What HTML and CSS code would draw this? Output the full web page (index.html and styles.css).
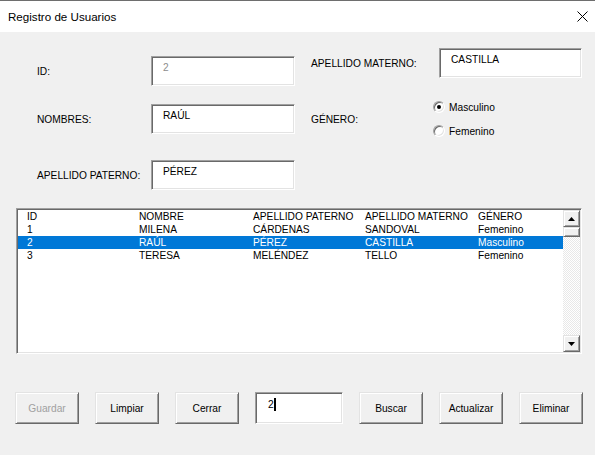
FILE: index.html
```html
<!DOCTYPE html>
<html lang="es">
<head>
<meta charset="utf-8">
<title>Registro de Usuarios</title>
<link rel="stylesheet" href="styles.css">
</head>
<body>
<div class="window">
  <div class="titlebar">
    <span class="title">Registro de Usuarios</span>
    <svg class="close" width="11" height="11" viewBox="0 0 11 11"><path d="M0.5 0.5 L10.5 10.5 M10.5 0.5 L0.5 10.5" stroke="#000" stroke-width="1" fill="none"/></svg>
  </div>
  <div class="content">
    <div class="form">
      <div class="col-left">
        <div class="field"><span class="label">ID:</span><div class="textbox disabled">2</div></div>
        <div class="field f-nom"><span class="label">NOMBRES:</span><div class="textbox">RAÚL</div></div>
        <div class="field f-pat"><span class="label">APELLIDO PATERNO:</span><div class="textbox">PÉREZ</div></div>
      </div>
      <div class="col-right">
        <div class="field-r"><span class="label">APELLIDO MATERNO:</span><div class="textbox">CASTILLA</div></div>
        <div class="gender">
          <span class="label">GÉNERO:</span>
          <div class="radios">
            <div class="radio-row"><span class="radio"><span class="dot"></span></span><span>Masculino</span></div>
            <div class="radio-row"><span class="radio"></span><span>Femenino</span></div>
          </div>
        </div>
      </div>
    </div>
    <div class="listbox">
      <div class="rows">
        <div class="row"><span>ID</span><span>NOMBRE</span><span>APELLIDO PATERNO</span><span>APELLIDO MATERNO</span><span>GÉNERO</span></div>
        <div class="row"><span>1</span><span>MILENA</span><span>CÁRDENAS</span><span>SANDOVAL</span><span>Femenino</span></div>
        <div class="row selected"><span>2</span><span>RAÚL</span><span>PÉREZ</span><span>CASTILLA</span><span>Masculino</span></div>
        <div class="row"><span>3</span><span>TERESA</span><span>MELÉNDEZ</span><span>TELLO</span><span>Femenino</span></div>
      </div>
      <div class="scrollbar">
        <div class="sb-btn"><svg width="7" height="4" viewBox="0 0 7 4"><path d="M3.5 0 L7 4 L0 4 Z" fill="#000"/></svg></div>
        <div class="sb-thumb"></div>
        <div class="sb-track"></div>
        <div class="sb-btn"><svg width="7" height="4" viewBox="0 0 7 4"><path d="M0 0 L7 0 L3.5 4 Z" fill="#000"/></svg></div>
      </div>
    </div>
    <div class="buttons">
      <div class="btn disabled">Guardar</div>
      <div class="btn">Limpiar</div>
      <div class="btn">Cerrar</div>
      <div class="textbox search">2<span class="caret"></span></div>
      <div class="btn">Buscar</div>
      <div class="btn">Actualizar</div>
      <div class="btn">Eliminar</div>
    </div>
  </div>
</div>
</body>
</html>
```

FILE: styles.css
```css
* { box-sizing: border-box; }
html, body { margin: 0; padding: 0; }
body {
  width: 595px;
  height: 455px;
  overflow: hidden;
  background: #f0f0f0;
  font-family: "Liberation Sans", Arial, sans-serif;
  font-size: 10.2px;
  color: #000;
}
.window { display: flex; flex-direction: column; height: 455px; }
.titlebar {
  height: 32px;
  background: #fff;
  border-top: 1px solid #6e6e6e;
  display: flex;
  align-items: center;
  justify-content: space-between;
  padding: 0 7px 0 8px;
}
.title { font-size: 11.6px; color: #000; }
.close { display: block; }
.content { display: flex; flex-direction: column; }
.form { display: flex; padding-top: 16px; }
.col-left { padding-left: 37px; margin-top: 8px; width: 295px; }
.field { display: grid; grid-template-columns: 114px 144px; align-items: center; height: 30px; }
.f-nom { margin-top: 18px; }
.f-pat { margin-top: 26px; }
.col-right { margin-left: 16px; }
.field-r { display: grid; grid-template-columns: 128px 143px; align-items: center; height: 30px; }
.label { white-space: nowrap; }
.textbox {
  height: 30px;
  background: #fff;
  border: 1px solid;
  border-color: #a0a0a0 #fff #fff #a0a0a0;
  box-shadow: inset 1px 1px #696969, inset -1px -1px #e3e3e3;
  padding: 4px 0 0 11px;
  line-height: 13px;
  white-space: nowrap;
}
.textbox.disabled { color: #8d8d8d; }
.gender { display: flex; align-items: center; margin-top: 17px; }
.gender .label { width: 122px; }
.radios { display: flex; flex-direction: column; }
.radio-row { display: flex; align-items: center; height: 24px; gap: 4px; }
.radio {
  width: 12px; height: 12px;
  border-radius: 50%;
  background: #fff;
  border: 1px solid;
  border-color: #a0a0a0 #fff #fff #a0a0a0;
  box-shadow: inset 1px 1px #696969, inset -1px -1px #e3e3e3;
  display: flex; align-items: center; justify-content: center;
}
.dot { width: 4px; height: 4px; border-radius: 50%; background: #000; }
.listbox {
  margin: 18px 0 0 16px;
  width: 566px;
  height: 146px;
  background: #fff;
  border: 1px solid;
  border-color: #a0a0a0 #fff #fff #a0a0a0;
  box-shadow: inset 1px 1px #696969, inset -1px -1px #e3e3e3;
  display: flex;
  padding: 1px;
}
.rows { flex: 1; display: flex; flex-direction: column; }
.row {
  display: grid;
  grid-template-columns: 112px 114px 112px 113px 1fr;
  height: 13px;
  line-height: 13px;
  padding-left: 9px;
  white-space: nowrap;
}
.row.selected { background: #0078d7; color: #fff; }
.scrollbar { width: 17px; display: flex; flex-direction: column; }
.sb-btn {
  height: 17px;
  background: #f0f0f0;
  border: 1px solid;
  border-color: #e3e3e3 #696969 #696969 #e3e3e3;
  box-shadow: inset 1px 1px #fff, inset -1px -1px #a0a0a0;
  display: flex; align-items: center; justify-content: center;
}
.sb-btn svg { display: block; }
.sb-thumb {
  height: 10px;
  background: #f0f0f0;
  border: 1px solid;
  border-color: #e3e3e3 #696969 #696969 #e3e3e3;
  box-shadow: inset 1px 1px #fff, inset -1px -1px #a0a0a0;
}
.sb-track {
  flex: 1;
  background: repeating-conic-gradient(#fff 0 25%, #e8e8e8 0 50%) 0 0 / 2px 2px;
}
.buttons { display: flex; margin: 38px 0 0 15px; gap: 16px; }
.btn {
  width: 64px; height: 32px;
  background: #f0f0f0;
  border: 1px solid;
  border-color: #e3e3e3 #696969 #696969 #e3e3e3;
  box-shadow: inset 1px 1px #fff, inset -1px -1px #a0a0a0;
  display: flex; align-items: center; justify-content: center;
  white-space: nowrap;
}
.btn.disabled { color: #a0a0a0; }
.textbox.search { width: 88px; height: 32px; padding: 5px 0 0 12px; display: flex; align-items: flex-start; }
.caret { display: inline-block; width: 2px; height: 13px; background: #000; }
```
